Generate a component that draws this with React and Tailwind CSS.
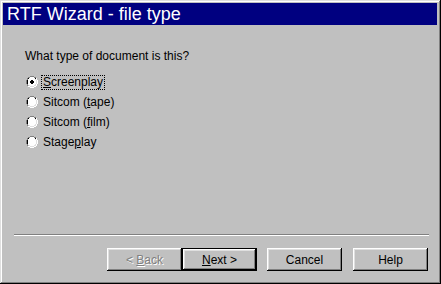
import React from "react";

const Radio = ({ checked, label, u, focus }) => {
  const parts = [label.slice(0, u), label[u], label.slice(u + 1)];
  return (
    <div className="flex items-center h-[20px]">
      <span className="relative w-[12px] h-[12px] ml-[1px] shrink-0">
        <svg width="12" height="12" viewBox="0 0 12 12" shapeRendering="crispEdges">
          <path d="M4 0h4v1H4zM2 1h2v1H2zM8 1h2v1H8zM1 2h1v2H1zM0 4h1v4H0zM1 8h1v2H1z" fill="#808080" />
          <path d="M4 1h4v1H4zM2 2h2v1H2zM8 2h2v1H8zM2 3h1v1H2zM1 4h1v4H1zM2 8h1v1H2z" fill="#000" />
          <path d="M2 3h8v6H2zM3 2h6v8H3zM4 1h4v10H4z" fill="#fff" />
          <path d="M10 2h1v2h-1zM11 4h1v4h-1zM10 8h1v2h-1zM8 10h2v1H8zM2 10h2v1H2zM4 11h4v1H4z" fill="#fff" />
          <path d="M9 3h1v1H9zM10 4h1v4h-1zM9 8h1v1H9zM8 9h2v1H8zM3 9h1v1H3zM4 10h4v1H4z" fill="#dfdfdf" />
          {checked && <path d="M5 4h2v1H5zM4 5h4v2H4zM5 7h2v1H5z" fill="#000" />}
        </svg>
      </span>
      <span
        className={`ml-[4px] px-[1px] leading-[13px] ${focus ? "outline outline-1 outline-dotted outline-black" : ""}`}
      >
        {parts[0]}
        <span className="underline underline-offset-[1px]">{parts[1]}</span>
        {parts[2]}
      </span>
    </div>
  );
};

const Btn = ({ children, def, disabled }) => (
  <div
    className={`w-[75px] h-[23px] flex items-center justify-center whitespace-pre ${
      def
        ? "border border-black shadow-[inset_-1px_-1px_#000,inset_1px_1px_#fff,inset_-2px_-2px_#808080,inset_2px_2px_#dfdfdf]"
        : "shadow-[inset_-1px_-1px_#000,inset_1px_1px_#fff,inset_-2px_-2px_#808080,inset_2px_2px_#dfdfdf]"
    } ${disabled ? "text-[#808080] [text-shadow:1px_1px_#fff]" : "text-black"}`}
  >
    {children}
  </div>
);

export default function App() {
  return (
    <div
      className="w-[441px] h-[284px] bg-[#c0c0c0] p-[3px] flex flex-col shadow-[inset_-1px_-1px_#000,inset_1px_1px_#dfdfdf,inset_-2px_-2px_#808080,inset_2px_2px_#fff] text-[12px] text-black"
      style={{ fontFamily: '"Liberation Sans", Arial, sans-serif' }}
    >
      <div className="h-[22px] bg-[#000080] text-white text-[18px] leading-[22px] pl-[4px] mr-[1px]">
        RTF Wizard - file type
      </div>
      <div className="pl-[22px] pt-[24px]">
        <div className="leading-[14px]">What type of document is this?</div>
        <div className="mt-[9px] flex flex-col">
          <Radio checked focus label="Screenplay" u={0} />
          <Radio label="Sitcom (tape)" u={8} />
          <Radio label="Sitcom (film)" u={8} />
          <Radio label="Stageplay" u={5} />
        </div>
      </div>
      <div className="flex-1" />
      <div className="mx-[11px] h-[2px] border-t border-[#808080] border-b border-b-white mr-[9px]" />
      <div className="flex mt-[12px] mb-[10px] pl-[104px]">
        <Btn disabled>
          {"< "}
          <span className="underline">B</span>
          {"ack"}
        </Btn>
        <Btn def>
          <span className="underline">N</span>
          {"ext >"}
        </Btn>
        <div className="w-[10px]" />
        <Btn>Cancel</Btn>
        <div className="w-[11px]" />
        <Btn>Help</Btn>
      </div>
    </div>
  );
}
